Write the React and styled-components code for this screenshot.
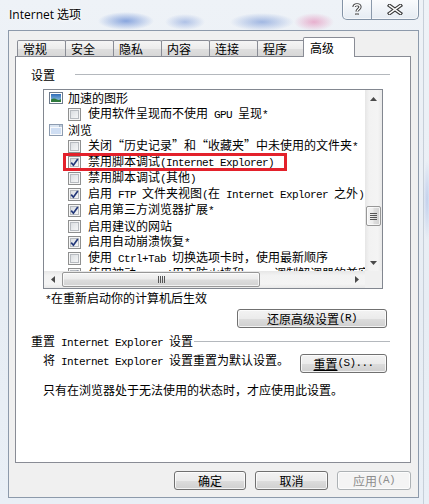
import React from 'react';
import styled, { createGlobalStyle } from 'styled-components';

const CJK = `"Noto Sans CJK SC", "Noto Sans", sans-serif`;

const GlobalStyle = createGlobalStyle`
  html, body { margin: 0; padding: 0; }
  body { width: 429px; height: 504px; overflow: hidden; background: #e9eff6; }
`;

const Frame = styled.div`
  position: relative;
  width: 429px;
  height: 504px;
  box-sizing: border-box;
  padding: 0 10px 6px 8px;
  display: flex;
  flex-direction: column;
  font-family: ${CJK};
  font-size: 12px;
  color: #000;
  background:
    radial-gradient(ellipse 28px 9px at 126px 21px, rgba(70, 115, 205, 0.6), transparent),
    radial-gradient(ellipse 20px 8px at 185px 22px, rgba(100, 135, 210, 0.45), transparent),
    radial-gradient(ellipse 32px 9px at 262px 22px, rgba(85, 125, 205, 0.5), transparent),
    radial-gradient(ellipse 20px 9px at 314px 22px, rgba(225, 110, 165, 0.5), transparent),
    radial-gradient(ellipse 4px 40px at 427px 200px, rgba(120, 150, 220, 0.35), transparent),
    linear-gradient(90deg, transparent 423px, #c7cfd9 423px, #c7cfd9 424px, transparent 424px),
    linear-gradient(180deg, #eef2f7 0%, #e7edf4 60%, #e9eff6 100%);
`;

const TitleBar = styled.div`
  height: 30px;
  flex-shrink: 0;
  display: flex;
  justify-content: space-between;
  align-items: flex-start;
`;

const Title = styled.div`
  margin: 8px 0 0 1px;
  font-family: "Open Sans", "Noto Sans CJK SC", sans-serif;
  font-size: 12px;
  line-height: 14px;
  color: #000;
  text-shadow: 0 0 5px #fff, 0 0 3px #fff;
`;

const Caption = styled.div`
  display: flex;
  height: 21px;
  margin: -1px 0 0 0;
  box-sizing: border-box;
  border: 1px solid #8393a6;
  border-top: none;
  border-radius: 0 0 5px 5px;
  overflow: hidden;
  background: linear-gradient(180deg, rgba(255, 255, 255, 0.75), rgba(226, 233, 241, 0.7));
  box-shadow: inset 0 0 0 1px rgba(255, 255, 255, 0.6);
`;

const CapBtn = styled.div`
  width: ${(p) => p.$w}px;
  display: flex;
  align-items: center;
  justify-content: center;
  padding-top: 1px;
  & + & { border-left: 1px solid #8a99ab; }
`;

const Client = styled.div`
  flex: 1;
  display: flex;
  flex-direction: column;
  background: #f0f0f0;
  border: 1px solid #8d9aab;
  padding: 6px 7px 7px 6px;
  min-height: 0;
`;

const TabRow = styled.div`
  height: 19px;
  flex-shrink: 0;
  display: flex;
  align-items: flex-end;
  padding-left: 2px;
`;

const Tab = styled.div`
  box-sizing: border-box;
  position: relative;
  width: ${(p) => (p.$active ? 52 : 49)}px;
  height: ${(p) => (p.$active ? 20 : 16)}px;
  margin: 0 -1px ${(p) => (p.$active ? -1 : 0)}px ${(p) => (p.$active ? -2 : 0)}px;
  padding: ${(p) => (p.$active ? '0 0 0 6px' : '1px 0 0 5px')};
  border: 1px solid #898c95;
  border-bottom: none;
  border-radius: 2px 2px 0 0;
  background: ${(p) =>
    p.$active ? '#fff' : 'linear-gradient(180deg, #f5f5f5 0%, #ececec 50%, #dfdfdf 51%, #d7d7d7 100%)'};
  z-index: ${(p) => (p.$active ? 2 : 1)};
  font-size: 12px;
  line-height: ${(p) => (p.$active ? 19 : 14)}px;
  white-space: nowrap;
`;

const Panel = styled.div`
  flex: 1;
  min-height: 0;
  background: #fff;
  border: 1px solid #898c95;
  display: flex;
  flex-direction: column;
`;

const GroupHead = styled.div`
  display: flex;
  align-items: center;
  height: 12px;
  line-height: 12px;
  margin: ${(p) => p.$mt}px 20px 0 15px;
  white-space: nowrap;
  &::after {
    content: '';
    flex: 1;
    height: 1px;
    background: #b4b8bd;
    margin-left: ${(p) => p.$gap}px;
    margin-top: -1px;
  }
`;

const ListBox = styled.div`
  position: relative;
  margin: 8px 27px 0 27px;
  height: 200px;
  box-sizing: border-box;
  border: 1px solid #828790;
  background: #fff;
  display: grid;
  grid-template-columns: 1fr 17px;
  grid-template-rows: 1fr 17px;
  flex-shrink: 0;
`;

const ListContent = styled.div`
  position: relative;
  overflow: hidden;
  white-space: nowrap;
`;

const Row = styled.div`
  height: 16px;
  display: flex;
  align-items: center;
  padding-left: ${(p) => (p.$group ? 4 : 24)}px;
  gap: ${(p) => (p.$group ? 4 : 7)}px;
  line-height: 16px;
`;

const CheckBox = styled.span`
  flex-shrink: 0;
  box-sizing: border-box;
  width: 13px;
  height: 13px;
  border: 1px solid #8e8f8f;
  background: linear-gradient(135deg, #d3d6da 0%, #eceef0 60%, #fbfbfb 100%);
  box-shadow: inset 0 0 0 1px #f6f6f6, inset 0 0 0 2px #b7bbc0;
  display: flex;
  align-items: center;
  justify-content: center;
`;

const Annotation = styled.div`
  position: absolute;
  left: 19px;
  top: 63px;
  width: 224px;
  height: 18px;
  box-sizing: border-box;
  border: 3px solid #e3212b;
  pointer-events: none;
`;

const VScroll = styled.div`
  display: flex;
  flex-direction: column;
  background: linear-gradient(90deg, #e6e6e6 0%, #f2f2f2 25%, #f4f4f4 75%, #e9e9e9 100%);
`;

const HScroll = styled.div`
  display: flex;
  background: linear-gradient(180deg, #e6e6e6 0%, #f2f2f2 25%, #f4f4f4 75%, #e9e9e9 100%);
`;

const Corner = styled.div`
  background: #f0f0f0;
`;

const Arrow = styled.div`
  flex-shrink: 0;
  width: 17px;
  height: 17px;
  display: flex;
  align-items: center;
  justify-content: center;
`;

const Track = styled.div`
  flex: 1;
  display: flex;
  flex-direction: ${(p) => (p.$vertical ? 'column' : 'row')};
`;

const Thumb = styled.div`
  box-sizing: border-box;
  flex-shrink: 0;
  border: 1px solid #979797;
  border-radius: 2px;
  display: flex;
  align-items: center;
  justify-content: center;
  ${(p) =>
    p.$vertical
      ? `width: 15px; margin-left: 1px; height: ${p.$size}px; margin-top: ${p.$offset}px;
         background: linear-gradient(90deg, #f5f5f5 0%, #ececec 45%, #dcdcdc 55%, #d2d2d2 100%);`
      : `height: 15px; margin-top: 1px; width: ${p.$size}px; margin-left: ${p.$offset}px;
         background: linear-gradient(180deg, #f5f5f5 0%, #ececec 45%, #dcdcdc 55%, #d2d2d2 100%);`}
  box-shadow: inset 0 0 0 1px rgba(255, 255, 255, 0.7);
`;

const Grip = styled.div`
  ${(p) =>
    p.$vertical
      ? `width: 7px; height: 7px;
         background: repeating-linear-gradient(180deg, #555 0, #555 1px, transparent 1px, transparent 2px);`
      : `width: 7px; height: 7px;
         background: repeating-linear-gradient(90deg, #555 0, #555 1px, transparent 1px, transparent 2px);`}
`;

const Note = styled.div`
  margin: 3px 0 0 29px;
  line-height: 12px;
  height: 12px;
  white-space: nowrap;
`;

const Button = styled.button`
  box-sizing: border-box;
  flex-shrink: 0;
  width: ${(p) => p.$w}px;
  height: 19px;
  padding: 0;
  font-family: ${CJK};
  font-size: 12px;
  line-height: 17px;
  color: ${(p) => (p.disabled ? '#8d8d8d' : '#000')};
  border: 1px solid ${(p) => (p.disabled ? '#adb2b5' : '#707070')};
  border-radius: 3px;
  background: ${(p) =>
    p.disabled
      ? '#f4f4f4'
      : 'linear-gradient(180deg, #f3f3f3 0%, #ebebeb 50%, #dddddd 51%, #cfcfcf 100%)'};
  box-shadow: inset 0 0 0 1px rgba(255, 255, 255, 0.75);
  display: flex;
  align-items: center;
  justify-content: center;
  white-space: nowrap;
`;

const RestoreButton = styled(Button)`
  align-self: flex-end;
  margin: 5px 23px 0 0;
`;

const ResetRow = styled.div`
  display: flex;
  justify-content: space-between;
  align-items: flex-start;
  margin: 6px 23px 0 27px;
`;

const Text = styled.div`
  line-height: 12px;
  white-space: nowrap;
  margin: ${(p) => p.$m || '0'};
`;

const Footer = styled.div`
  flex-shrink: 0;
  display: flex;
  justify-content: flex-end;
  gap: 9px;
  margin-top: 8px;
`;

const Latin = styled.span`
  font-family: "Liberation Mono", monospace;
  font-size: 11px;
  letter-spacing: -0.6px;
  white-space: pre;
`;

const Key = styled.span`
  text-decoration: underline;
`;

function Mixed({ text }) {
  const parts = text.split(/([\x20-\x7e]+)/);
  return parts.map((p, i) =>
    p === '' ? null : /[\x20-\x7e]/.test(p[0]) ? (
      <Latin key={i}>{p}</Latin>
    ) : (
      <React.Fragment key={i}>{p}</React.Fragment>
    )
  );
}

const GraphicsIcon = () => (
  <svg width="16" height="16" viewBox="0 0 16 16">
    <defs>
      <linearGradient id="sky" x1="0" y1="0" x2="0" y2="1">
        <stop offset="0" stopColor="#2f6cb8" />
        <stop offset="1" stopColor="#9fd0ea" />
      </linearGradient>
    </defs>
    <rect x="1.5" y="2.5" width="13" height="11" fill="#fff" stroke="#6d7a8b" />
    <rect x="3" y="4" width="10" height="8" fill="url(#sky)" />
    <path d="M3 12 L3 9.5 Q6 7.5 9 9.5 Q11 10.5 13 9 L13 12 Z" fill="#2f7a3c" />
  </svg>
);

const BrowseIcon = () => (
  <svg width="16" height="16" viewBox="0 0 16 16">
    <rect x="1.5" y="2.5" width="13" height="11" fill="#f7f9fc" stroke="#8d9cb0" />
    <rect x="2" y="3" width="12" height="2" fill="#d9e4f1" />
    <rect x="11" y="3.5" width="1" height="1" fill="#6b7d95" />
    <rect x="12.5" y="3.5" width="1" height="1" fill="#6b7d95" />
    <rect x="3" y="6.5" width="10" height="1" fill="#a8c4ea" />
    <rect x="3" y="8.5" width="10" height="1" fill="#a8c4ea" />
    <rect x="3" y="10.5" width="10" height="1" fill="#a8c4ea" />
  </svg>
);

const CheckMark = () => (
  <svg width="9" height="9" viewBox="0 0 9 9">
    <path d="M1.2 4.6 L3.4 7.2 L7.8 1" fill="none" stroke="#23387a" strokeWidth="1.7" />
  </svg>
);

const Tri = ({ dir }) => {
  const d = {
    up: 'M0 4 L3.5 0 L7 4 Z',
    down: 'M0 0 L7 0 L3.5 4 Z',
    left: 'M4 0 L4 7 L0 3.5 Z',
    right: 'M0 0 L4 3.5 L0 7 Z',
  }[dir];
  const vertical = dir === 'up' || dir === 'down';
  return (
    <svg width={vertical ? 7 : 4} height={vertical ? 4 : 7} viewBox={vertical ? '0 0 7 4' : '0 0 4 7'}>
      <path d={d} fill="#4a4a4a" />
    </svg>
  );
};

const HelpGlyph = () => (
  <svg width="10" height="13" viewBox="0 0 10 13">
    <path d="M2 4 C2 1 8 1 8 4 C8 6.2 5 6.2 5 8.5" fill="none" stroke="#3b3b3b" strokeWidth="3.2" />
    <path d="M5 10.2 L5 12" stroke="#3b3b3b" strokeWidth="3.2" />
    <path d="M2 4 C2 1 8 1 8 4 C8 6.2 5 6.2 5 8.5" fill="none" stroke="#fff" strokeWidth="1.3" />
    <path d="M5 10.4 L5 11.8" stroke="#fff" strokeWidth="1.3" />
  </svg>
);

const CloseGlyph = () => (
  <svg width="16" height="11" viewBox="0 0 16 11">
    <path d="M2.5 1.5 L13.5 9.5 M13.5 1.5 L2.5 9.5" stroke="#3b3b3b" strokeWidth="3.6" strokeLinecap="square" />
    <path d="M2.5 1.5 L13.5 9.5 M13.5 1.5 L2.5 9.5" stroke="#fff" strokeWidth="1.5" strokeLinecap="square" />
  </svg>
);

const tabs = ['常规', '安全', '隐私', '内容', '连接', '程序', '高级'];

const rows = [
  { group: true, icon: 'graphics', text: '加速的图形' },
  { text: '使用软件呈现而不使用 GPU 呈现*' },
  { group: true, icon: 'browse', text: '浏览' },
  { text: '关闭“历史记录”和“收藏夹”中未使用的文件夹*' },
  { checked: true, text: '禁用脚本调试(Internet Explorer)' },
  { text: '禁用脚本调试(其他)' },
  { checked: true, text: '启用 FTP 文件夹视图(在 Internet Explorer 之外)' },
  { checked: true, text: '启用第三方浏览器扩展*' },
  { text: '启用建议的网站' },
  { checked: true, text: '启用自动崩溃恢复*' },
  { text: '使用 Ctrl+Tab 切换选项卡时，使用最新顺序' },
  { checked: true, text: '使用被动 FTP (用于防火墙和 DSL 调制解调器的兼容性)' },
];

export default function App() {
  return (
    <>
      <GlobalStyle />
      <Frame lang="zh-CN">
        <TitleBar>
          <Title>Internet 选项</Title>
          <Caption>
            <CapBtn $w={28}>
              <HelpGlyph />
            </CapBtn>
            <CapBtn $w={46}>
              <CloseGlyph />
            </CapBtn>
          </Caption>
        </TitleBar>
        <Client>
          <TabRow>
            {tabs.map((t, i) => (
              <Tab key={t} $active={i === tabs.length - 1}>
                {t}
              </Tab>
            ))}
          </TabRow>
          <Panel>
            <GroupHead $mt={12} $gap={20}>设置</GroupHead>
            <ListBox>
              <ListContent>
                {rows.map((r, i) =>
                  r.group ? (
                    <Row key={i} $group>
                      {r.icon === 'graphics' ? <GraphicsIcon /> : <BrowseIcon />}
                      <span>{r.text}</span>
                    </Row>
                  ) : (
                    <Row key={i}>
                      <CheckBox>{r.checked && <CheckMark />}</CheckBox>
                      <span>
                        <Mixed text={r.text} />
                      </span>
                    </Row>
                  )
                )}
                <Annotation />
              </ListContent>
              <VScroll>
                <Arrow>
                  <Tri dir="up" />
                </Arrow>
                <Track $vertical>
                  <Thumb $vertical $offset={99} $size={20}>
                    <Grip $vertical />
                  </Thumb>
                </Track>
                <Arrow>
                  <Tri dir="down" />
                </Arrow>
              </VScroll>
              <HScroll>
                <Arrow>
                  <Tri dir="left" />
                </Arrow>
                <Track>
                  <Thumb $offset={1} $size={198}>
                    <Grip />
                  </Thumb>
                </Track>
                <Arrow>
                  <Tri dir="right" />
                </Arrow>
              </HScroll>
              <Corner />
            </ListBox>
            <Note>
              <Mixed text="*在重新启动你的计算机后生效" />
            </Note>
            <RestoreButton $w={150}>
              <Mixed text="还原高级设置(R)" />
            </RestoreButton>
            <GroupHead $mt={8} $gap={1}>
              <span>
                <Mixed text="重置 Internet Explorer 设置" />
              </span>
            </GroupHead>
            <ResetRow>
              <Text>
                <Mixed text="将 Internet Explorer 设置重置为默认设置。" />
              </Text>
              <Button $w={87}>
                <Key>重置</Key>
                <Mixed text="(S)..." />
              </Button>
            </ResetRow>
            <Text $m="11px 0 0 27px">只有在浏览器处于无法使用的状态时，才应使用此设置。</Text>
          </Panel>
          <Footer>
            <Button $w={72}>确定</Button>
            <Button $w={73}>取消</Button>
            <Button $w={74} disabled>
              应用<Mixed text="(A)" />
            </Button>
          </Footer>
        </Client>
      </Frame>
    </>
  );
}
